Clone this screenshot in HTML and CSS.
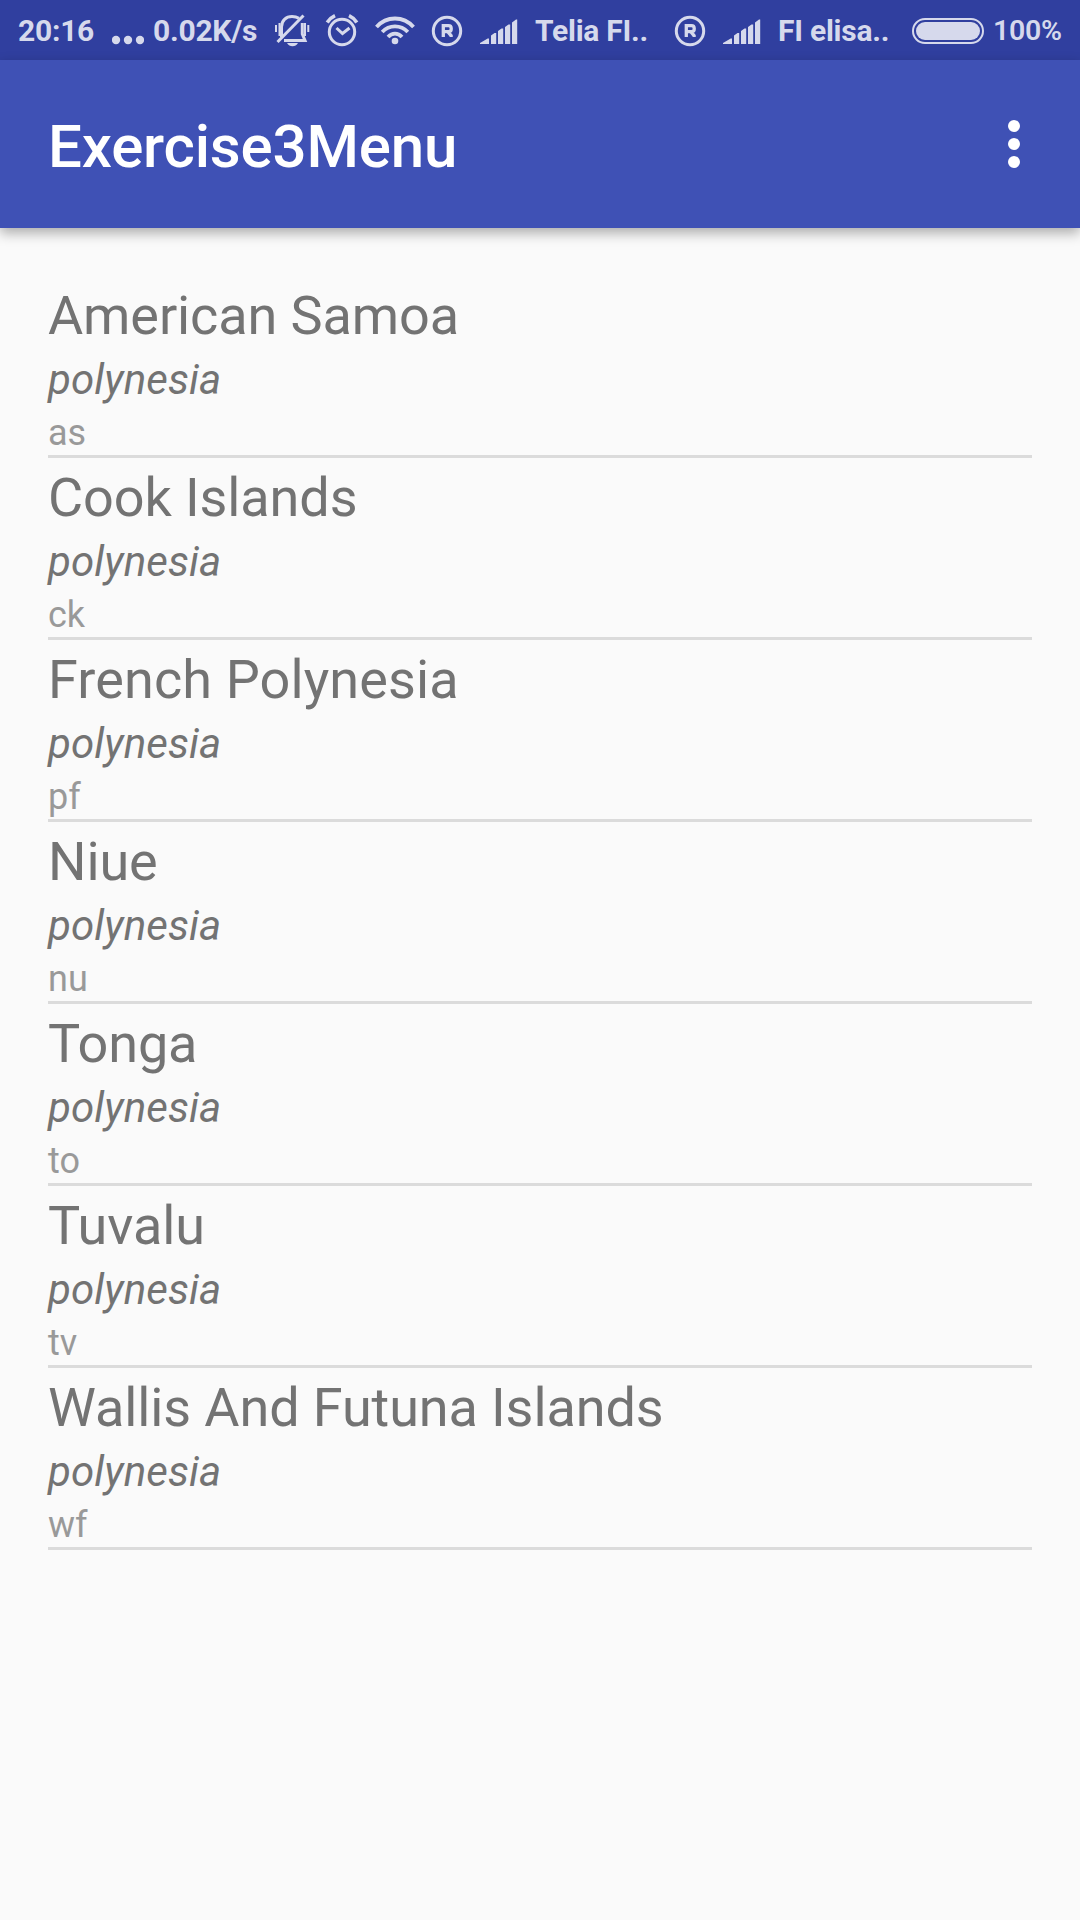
FILE: index.html
```html
<!DOCTYPE html>
<html lang="en">
<head>
<meta charset="utf-8">
<title>Exercise3Menu</title>
<link rel="stylesheet" href="styles.css">
</head>
<body>
<svg class="defs" width="0" height="0" aria-hidden="true">
  <symbol id="registered" viewBox="0 0 34 34">
    <circle cx="17" cy="17" r="13.700" fill="none" stroke="currentColor" stroke-width="3"/>
    <path d="M13.300 23V11.700h5.200q2.700 0 2.700 2.600v.9q0 2.400-2.700 2.400h-5M17.700 17.600l3.400 4v1.400" fill="none" stroke="currentColor" stroke-width="3.300"/>
  </symbol>
  <symbol id="signal" viewBox="0 0 39 26">
    <path d="M1 25v-1l7.700-4.500h1.300V25zM12 25V16.500l3.500-2.500h1.700V25zM19 25V12l3.500-2.500H24.200V25zM26 25V8l3.500-2.500H31.200V25zM33 25V3.500L37 .5h1.200V25z" fill="currentColor"/>
  </symbol>
</svg>
<header class="status">
  <span>20:16</span>
  <svg width="32" height="60" viewBox="0 0 32 60" fill="currentColor"><circle cx="4" cy="39" r="4.200"/><circle cx="16" cy="39" r="4.200"/><circle cx="28" cy="39" r="4.200"/></svg>
  <span>0.02K/s</span>
  <svg width="40" height="60" viewBox="272 0 40 60" fill="none" stroke="currentColor" stroke-width="3">
    <path d="M276 24v7M279.500 22v13M305 22v13M308.300 24v7" stroke-width="2"/>
    <path d="M281.500 36V26C281.500 19.500 286 15.500 292 15.500Q296 15.500 299 17.300M302.300 22V33L305 39.500H284"/>
    <path d="M277.500 41L303.500 14.500" stroke-width="3"/>
    <path d="M287 42h11q-2 3.200-5.500 3.200T287 42z" fill="currentColor" stroke="none"/>
  </svg>
  <svg width="38" height="60" viewBox="323 0 38 60" fill="none" stroke="currentColor" stroke-width="3">
    <circle cx="342" cy="31" r="12.700"/>
    <path d="M336.500 27l6 5.500 7-5.500" stroke-width="3"/>
    <path d="M327.200 21.500Q330 17 335 14.700M356.800 21.500Q354 17 349 14.700" stroke-width="3.600"/>
  </svg>
  <svg width="46" height="60" viewBox="372 0 46 60" fill="none" stroke="currentColor" stroke-width="3.800">
    <path d="M376.500 26Q384 17.500 395 17.500T413.500 26M382.200 31Q387.500 25.300 395 25.300T407.800 31M388 36Q391 32.700 395 32.700T402 36"/>
    <circle cx="395" cy="40" r="3.300" fill="currentColor" stroke="none"/>
  </svg>
  <svg width="34" height="34"><use href="#registered"/></svg>
  <svg class="bars" width="39" height="26"><use href="#signal"/></svg>
  <span>Telia FI..</span>
  <svg width="34" height="34"><use href="#registered"/></svg>
  <svg class="bars" width="39" height="26"><use href="#signal"/></svg>
  <span>FI elisa..</span>
  <svg width="72" height="26" viewBox="0 0 72 26"><rect x="1" y="1" width="70" height="24" rx="12" fill="none" stroke="currentColor" stroke-width="2"/><rect x="4" y="4" width="64" height="18" rx="9" fill="currentColor"/></svg>
  <span class="percent">100%</span>
</header>
<nav class="appbar">
  <h1 class="title">Exercise3Menu</h1>
  <svg class="more" width="12" height="48" viewBox="0 0 12 48" fill="currentColor"><circle cx="6" cy="6" r="6"/><circle cx="6" cy="24" r="6"/><circle cx="6" cy="42" r="6"/></svg>
</nav>
<ul class="list">
  <li class="row"><div class="name">American Samoa</div><div class="region">polynesia</div><div class="code">as</div></li>
  <li class="row"><div class="name">Cook Islands</div><div class="region">polynesia</div><div class="code">ck</div></li>
  <li class="row"><div class="name wide">French Polynesia</div><div class="region">polynesia</div><div class="code">pf</div></li>
  <li class="row"><div class="name">Niue</div><div class="region">polynesia</div><div class="code">nu</div></li>
  <li class="row"><div class="name">Tonga</div><div class="region">polynesia</div><div class="code">to</div></li>
  <li class="row"><div class="name">Tuvalu</div><div class="region">polynesia</div><div class="code">tv</div></li>
  <li class="row"><div class="name">Wallis And Futuna Islands</div><div class="region">polynesia</div><div class="code">wf</div></li>
</ul>
</body>
</html>
```
FILE: styles.css
```css
* { box-sizing: border-box; }
body {
  margin: 0;
  min-height: 1920px;
  background: #fafafa;
  font-family: Roboto, "Liberation Sans", sans-serif;
}
.defs { display: none; }
.status {
  display: grid;
  grid-template-columns: 94px 41px 119px 51px 49px 58px 49px 56px 138px 49px 56px 134px 81px 80px;
  align-items: center;
  height: 60px;
  padding-left: 18px;
  background: #303f9f;
  color: #d6d9ec;
  font-size: 30px;
  font-weight: 700;
  line-height: 60px;
  letter-spacing: -.25px;
  white-space: nowrap;
}
.status svg { display: block; }
.status span { padding-top: 1px; }
.bars { margin-top: 2px; }
.percent { font-size: 28.500px; font-weight: 600; }
.appbar {
  display: flex;
  align-items: center;
  justify-content: space-between;
  height: 168px;
  padding: 0 60px 0 48px;
  background: #3f51b5;
  color: #fff;
  box-shadow: 0 5px 12px rgba(0, 0, 0, .32);
}
.title { margin: 6px 0 0; font-size: 60px; font-weight: 500; line-height: 72px; letter-spacing: -.17px; }
.list { margin: 0; padding: 48px 48px 0; list-style: none; }
.row {
  height: 182px;
  padding-top: 4px;
  border-bottom: 3px solid #dbdbdb;
  color: #737373;
}
.name { font-size: 54px; line-height: 72px; letter-spacing: -.11px; }
.wide { letter-spacing: .12px; }
.region { font-size: 42px; font-style: italic; line-height: 56px; letter-spacing: .1px; }
.code { font-size: 36px; line-height: 50px; color: #999; }
```
